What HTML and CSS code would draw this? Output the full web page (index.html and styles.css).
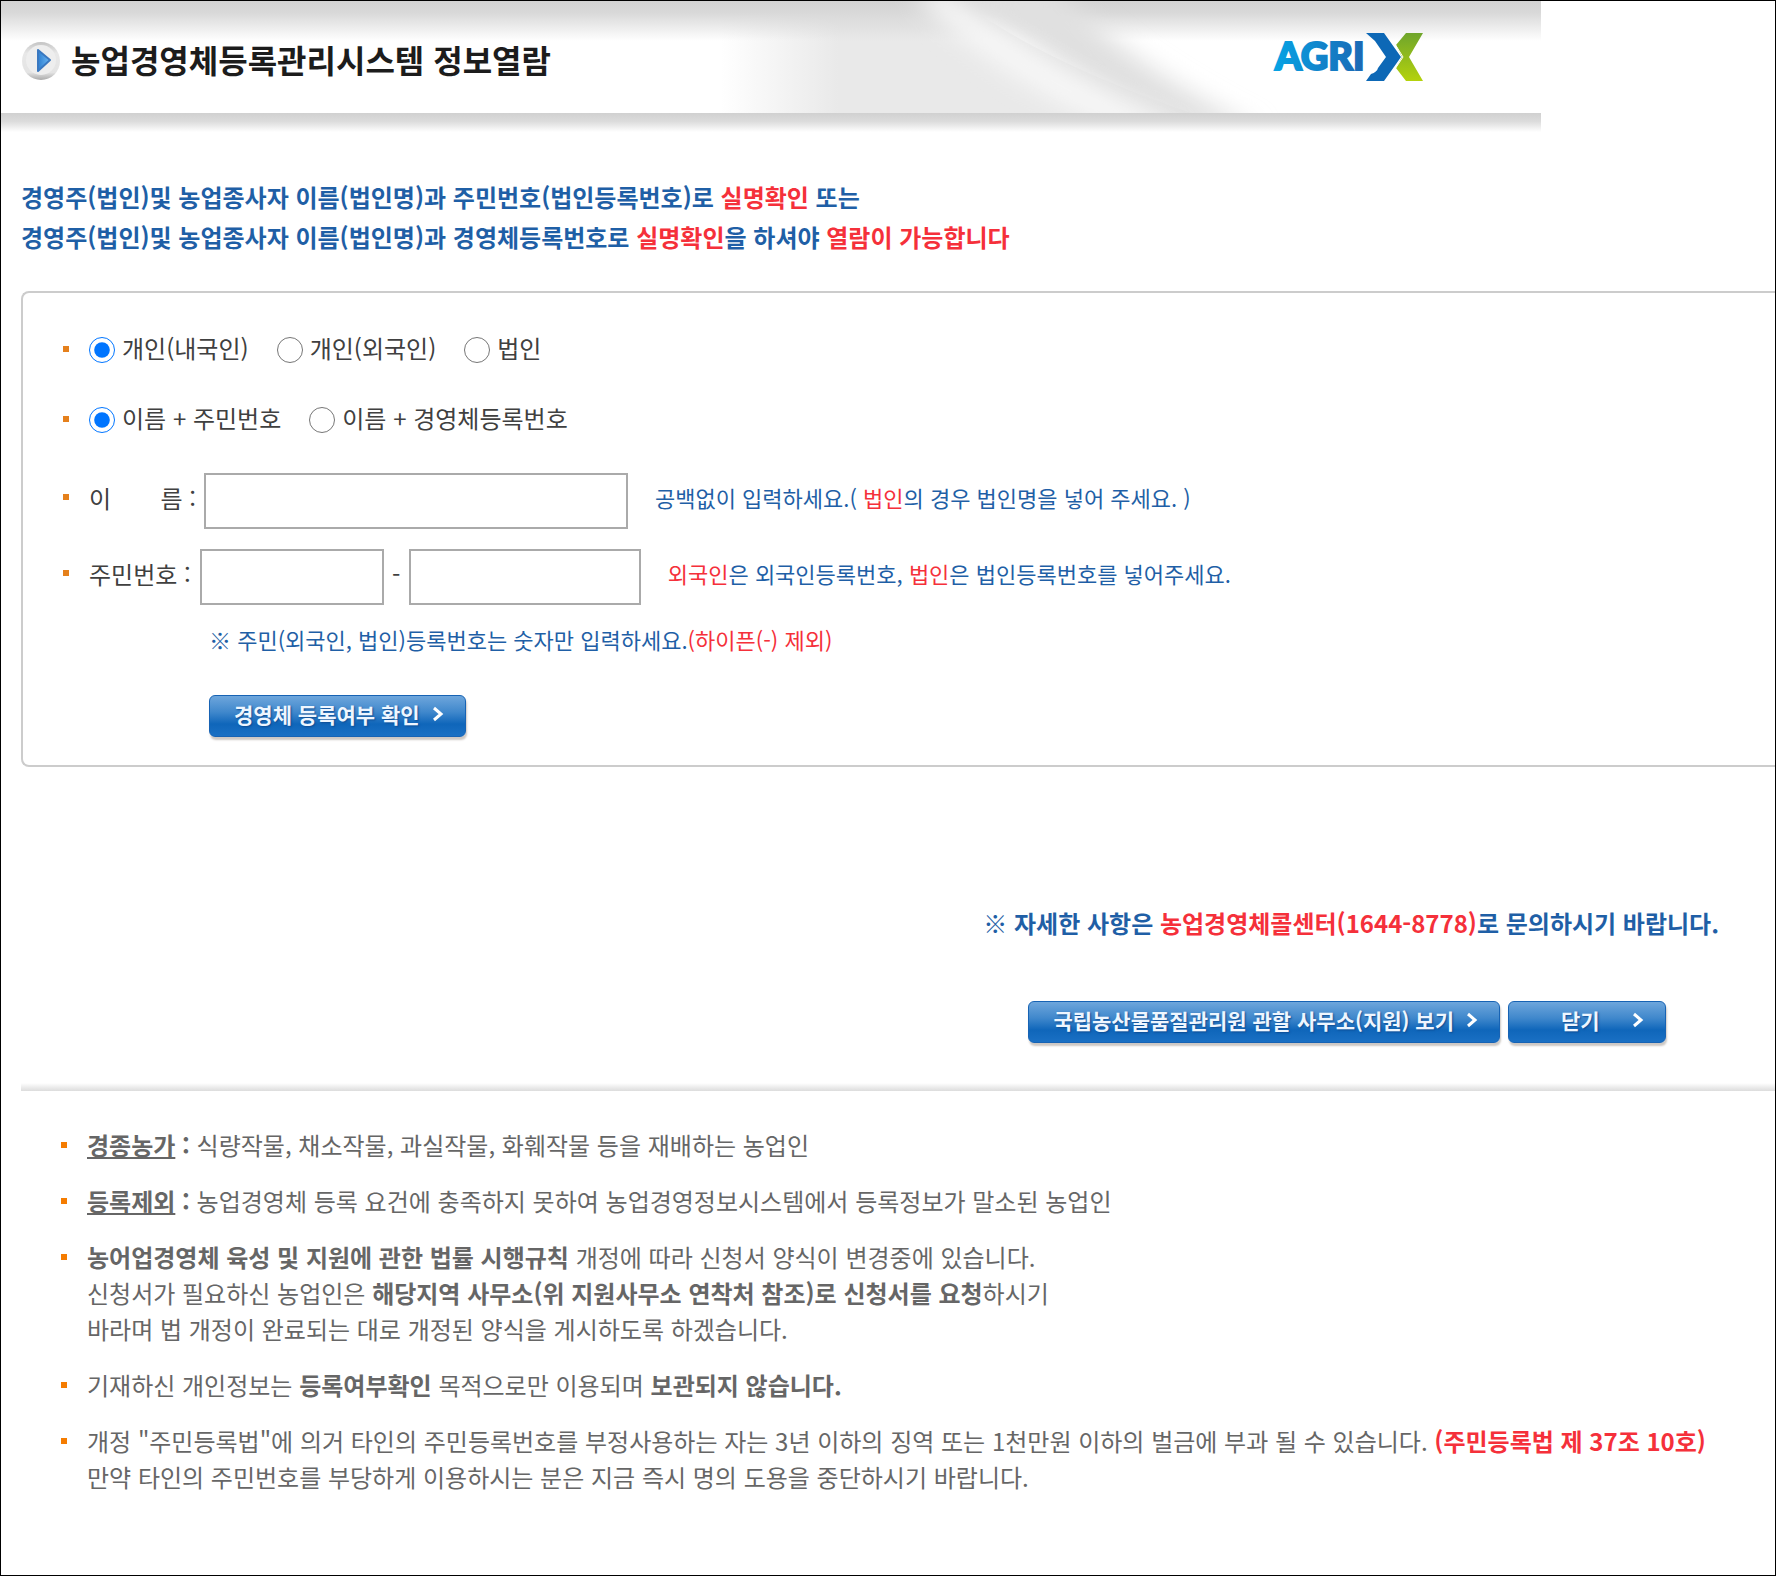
FILE: index.html
```
<!DOCTYPE html>
<html lang="ko">
  <head>
    <meta charset="UTF-8" />
    <title>농업경영체등록관리시스템 정보열람</title>
    <link rel="stylesheet" href="styles.css">
  </head>
  <body>
    <div class="wrapper">
      <header class="header">
        <svg class="header__bg" viewBox="0 0 1540 112" preserveAspectRatio="none" aria-hidden="true">
          <defs>
            <linearGradient id="mid" x1="0" x2="1" y1="0" y2="0">
              <stop offset="0" stop-color="#e9e9e9" stop-opacity="0" />
              <stop offset="0.25" stop-color="#e9e9e9" />
              <stop offset="1" stop-color="#e9e9e9" />
            </linearGradient>
            <linearGradient id="top" x1="0" x2="0" y1="0" y2="1">
              <stop offset="0" stop-color="#d3d3d3" />
              <stop offset="0.3" stop-color="#d9d9d9" />
              <stop offset="1" stop-color="#d9d9d9" stop-opacity="0" />
            </linearGradient>
            <filter id="soft" x="-20%" y="-20%" width="140%" height="140%">
              <feGaussianBlur stdDeviation="12" />
            </filter>
          </defs>
          <path fill="url(#mid)" d="M720 0H960Q1040 60 1190 112H720Z" />
          <rect fill="url(#top)" width="1540" height="40" />
          <path fill="#e0e0e0" filter="url(#soft)" d="M950 -20H1050Q1120 60 1260 130H1190Q1050 80 950 -20Z" />
          <path fill="#f8f8f8" filter="url(#soft)" d="M910 -10H945Q1040 70 1190 130H1120Q1000 80 910 -10Z" />
        </svg>
        <svg class="header__icon" viewBox="0 0 40 42" aria-hidden="true">
          <defs>
            <linearGradient id="ring" x1="0" x2="0" y1="0" y2="1">
              <stop offset="0" stop-color="#c4c4c4" />
              <stop offset="0.3" stop-color="#e8e8e8" />
              <stop offset="0.8" stop-color="#e4e4e4" />
              <stop offset="1" stop-color="#aaa" />
            </linearGradient>
            <linearGradient id="arrow" x1="0" x2="1" y1="0" y2="0">
              <stop offset="0" stop-color="#2f7fd0" />
              <stop offset="1" stop-color="#6cb8f4" />
            </linearGradient>
          </defs>
          <circle cx="20" cy="21" r="19" fill="url(#ring)" />
          <circle cx="20" cy="20" r="15" fill="#eee" />
          <path d="M17 10L29 20L17 31Z" fill="url(#arrow)" stroke="#3a78c0" stroke-width="2" stroke-linejoin="round" />
        </svg>
        <h1 class="header__title">농업경영체등록관리시스템 정보열람</h1>
        <svg class="header__logo" viewBox="0 0 152 48" role="img" aria-label="AGRIX">
          <defs>
            <linearGradient id="agri" x1="0" x2="1" y1="0" y2="0">
              <stop offset="0" stop-color="#06a3e4" />
              <stop offset="1" stop-color="#1c68b4" />
            </linearGradient>
            <linearGradient id="leaf" x1="0" x2="0" y1="0" y2="1">
              <stop offset="0" stop-color="#6fa52c" />
              <stop offset="1" stop-color="#b4d20c" />
            </linearGradient>
          </defs>
          <text class="header__logo-text" x="2" y="37" fill="url(#agri)" stroke="url(#agri)">AGRI</text>
          <path d="M93 0H111L128 24L111 48H93L98 41Q104 39 105 35L113 24L102 8Z" fill="#0d68b6" />
          <path d="M133 0H150L136 24L150 48H133L123 35L129 24L123 12Z" fill="url(#leaf)" />
          <path d="M122 11L130 24L122 36" fill="none" stroke="#fff" stroke-width="1" />
        </svg>
      </header>

      <main class="main">
        <p class="intro">
          경영주(법인)및 농업종사자 이름(법인명)과 주민번호(법인등록번호)로 <em>실명확인</em> 또는<br />
          경영주(법인)및 농업종사자 이름(법인명)과 경영체등록번호로 <em>실명확인</em>을 하셔야 <em>열람이 가능합니다</em>
        </p>

        <form class="form-box">
          <div class="form-row form-row--radio">
            <label class="radio"><input type="radio" name="userType" checked />개인(내국인)</label>
            <label class="radio"><input type="radio" name="userType" />개인(외국인)</label>
            <label class="radio"><input type="radio" name="userType" />법인</label>
          </div>
          <div class="form-row form-row--radio">
            <label class="radio"><input type="radio" name="searchType" checked />이름 + 주민번호</label>
            <label class="radio"><input type="radio" name="searchType" />이름 + 경영체등록번호</label>
          </div>
          <div class="form-row form-row--input">
            <label class="form-label form-label--name" for="userName"><span>이</span><span>름 :</span></label>
            <input class="text-input text-input--name" type="text" id="userName" />
            <span class="hint">공백없이 입력하세요.( <em>법인</em>의 경우 법인명을 넣어 주세요. )</span>
          </div>
          <div class="form-row form-row--input">
            <label class="form-label" for="jumin1">주민번호 :</label>
            <input class="text-input text-input--front" type="text" id="jumin1" maxlength="6" />
            <span class="dash">-</span>
            <input class="text-input text-input--back" type="password" id="jumin2" maxlength="7" aria-label="주민번호 뒷자리" />
            <span class="hint"><em>외국인</em>은 외국인등록번호, <em>법인</em>은 법인등록번호를 넣어주세요.</span>
          </div>
          <div class="form-sub">
            <p class="hint-line">※ 주민(외국인, 법인)등록번호는 숫자만 입력하세요.<em>(하이픈(-) 제외)</em></p>
            <button class="btn" type="button">
              경영체 등록여부 확인
              <svg class="btn__arrow" viewBox="0 0 12 16" aria-hidden="true"><path d="M2 2L9 8L2 14" /></svg>
            </button>
          </div>
        </form>

        <p class="contact">※ 자세한 사항은 <em>농업경영체콜센터(1644-8778)</em>로 문의하시기 바랍니다.</p>

        <div class="buttons">
          <button class="btn" type="button">
            국립농산물품질관리원 관할 사무소(지원) 보기
            <svg class="btn__arrow" viewBox="0 0 12 16" aria-hidden="true"><path d="M2 2L9 8L2 14" /></svg>
          </button>
          <button class="btn btn--close" type="button">
            닫기
            <svg class="btn__arrow" viewBox="0 0 12 16" aria-hidden="true"><path d="M2 2L9 8L2 14" /></svg>
          </button>
        </div>

        <div class="divider"></div>

        <ul class="notes">
          <li><b><u>경종농가</u> :</b> 식량작물, 채소작물, 과실작물, 화훼작물 등을 재배하는 농업인</li>
          <li><b><u>등록제외</u> :</b> 농업경영체 등록 요건에 충족하지 못하여 농업경영정보시스템에서 등록정보가 말소된 농업인</li>
          <li>
            <b>농어업경영체 육성 및 지원에 관한 법률 시행규칙</b> 개정에 따라 신청서 양식이 변경중에 있습니다.<br />
            신청서가 필요하신 농업인은 <b>해당지역 사무소(위 지원사무소 연착처 참조)로 신청서를 요청</b>하시기<br />
            바라며 법 개정이 완료되는 대로 개정된 양식을 게시하도록 하겠습니다.
          </li>
          <li>기재하신 개인정보는 <b>등록여부확인</b> 목적으로만 이용되며 <b>보관되지 않습니다.</b></li>
          <li>
            개정 "주민등록법"에 의거 타인의 주민등록번호를 부정사용하는 자는 3년 이하의 징역 또는 1천만원 이하의 벌금에 부과 될 수 있습니다. <b><em>(주민등록법 제 37조 10호)</em></b><br />
            만약 타인의 주민번호를 부당하게 이용하시는 분은 지금 즉시 명의 도용을 중단하시기 바랍니다.
          </li>
        </ul>
      </main>
    </div>
  </body>
</html>
```
FILE: styles.css
```
* {
  box-sizing: border-box;
}
body {
  margin: 0;
  font-family: "Noto Sans CJK KR", "Noto Sans", sans-serif;
  font-size: 24px;
  color: #404040;
  background: #fff;
}
p,
h1,
ul {
  margin: 0;
  padding: 0;
}
em {
  font-style: normal;
  color: #f5303a;
}
.wrapper {
  min-height: 100vh;
  border: 1px solid #000;
  overflow: hidden;
}
/* header */
.header {
  position: relative;
  display: flex;
  align-items: center;
  max-width: 1540px;
  height: 112px;
  padding: 0 116px 0 20px;
}
.header::after {
  content: "";
  position: absolute;
  top: 100%;
  left: 0;
  width: 100%;
  height: 19px;
  background: linear-gradient(#d0d0d0, #dcdcdc 45%, #fff);
}
.header__bg {
  position: absolute;
  top: 0;
  left: 0;
  width: 100%;
  height: 100%;
}
.header__icon {
  position: relative;
  width: 40px;
  height: 42px;
  margin-top: 8px;
}
.header__title {
  position: relative;
  margin-left: 10px;
  margin-top: 4px;
  font-size: 32px;
  line-height: 48px;
  font-weight: bold;
  color: #1c1c1c;
}
.header__logo {
  position: relative;
  width: 152px;
  height: 48px;
  margin-left: auto;
}
.header__logo-text {
  font-family: Lato, sans-serif;
  font-size: 38px;
  font-weight: 900;
  stroke-width: 2px;
}
/* content */
.main {
  padding-left: 20px;
}
.intro {
  padding-top: 64px;
  line-height: 40px;
  font-weight: bold;
  color: #1f5fa6;
}
.form-box {
  margin-top: 34px;
  padding: 36px 0 28px 66px;
  border: 2px solid #ccc;
  border-right: none;
  border-radius: 8px 0 0 8px;
}
.form-row {
  position: relative;
  display: flex;
  align-items: center;
}
.form-row::before,
.notes li::before {
  content: "";
  position: absolute;
  top: 18px;
  left: -26px;
  width: 6px;
  height: 6px;
  margin-top: -3px;
  background: #e5801c;
}
.form-row--radio {
  height: 40px;
  margin-bottom: 32px;
  padding-bottom: 4px;
  margin-bottom: 30px;
  gap: 28px;
}
.form-row--radio::before {
  top: 20px;
}
.form-row--input {
  height: 56px;
  margin-bottom: 20px;
}
.form-row--radio + .form-row--input {
  margin-top: 34px;
}
.form-row--input::before {
  top: 24px;
}
.radio {
  display: flex;
  align-items: center;
}
.radio input {
  width: 26px;
  height: 26px;
  margin: 6px 7px 0 0;
}
.form-label,
.dash,
.hint {
  padding-bottom: 8px;
  white-space: nowrap;
}
.form-label--name {
  display: flex;
  justify-content: space-between;
  width: 107px;
}
.text-input {
  height: 56px;
  padding: 0 12px;
  border: 2px solid #aaa;
  outline: none;
  font-size: 24px;
}
.text-input--name {
  width: 424px;
  margin-left: 8px;
}
.text-input--front {
  width: 184px;
  margin-left: 9px;
}
.text-input--back {
  width: 232px;
}
.dash {
  width: 25px;
  text-align: center;
}
.hint,
.hint-line {
  font-size: 22px;
  color: #1f5fa6;
}
.hint {
  margin-left: 27px;
}
.form-sub {
  padding-left: 120px;
}
.hint-line {
  line-height: 28px;
  margin-bottom: 42px;
}
.btn {
  display: flex;
  align-items: center;
  gap: 12px;
  height: 42px;
  padding: 0 21px 4px 24px;
  border: 1px solid #1763b4;
  border-radius: 6px;
  background: linear-gradient(#6ea6dc, #4088cc 40%, #0f66ba 70%, #1a70c4);
  box-shadow: 1px 3px 2px #cdc8c4;
  font-family: inherit;
  font-size: 21px;
  font-weight: bold;
  color: #eef6ff;
  text-shadow: 1px 1px 2px #0c4a90;
  cursor: pointer;
}
.btn__arrow {
  width: 12px;
  height: 16px;
}
.btn__arrow path {
  fill: none;
  stroke: #fff;
  stroke-width: 3;
}
.btn--close {
  width: 158px;
  padding-left: 52px;
  justify-content: space-between;
}
.contact {
  margin-top: 136px;
  padding-right: 56px;
  line-height: 40px;
  font-weight: bold;
  text-align: right;
  color: #1f5fa6;
}
.buttons {
  display: flex;
  justify-content: flex-end;
  gap: 8px;
  margin-top: 58px;
  padding-right: 109px;
}
.divider {
  height: 8px;
  margin-top: 40px;
  background: linear-gradient(#fff, #dcdcdc);
}
.notes {
  padding: 36px 0 60px 66px;
  line-height: 36px;
  list-style: none;
  color: #666;
}
.notes li {
  position: relative;
  margin-bottom: 20px;
}
.notes li::before {
  background: #f57c00;
}
```
